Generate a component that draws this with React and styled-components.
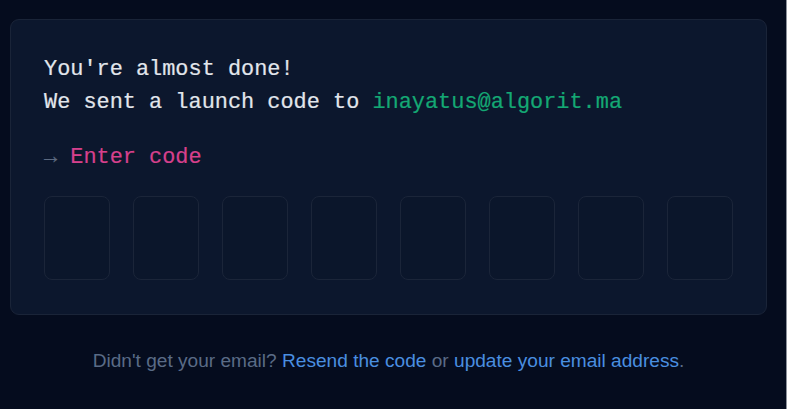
import React from "react";
import styled, { createGlobalStyle } from "styled-components";

const Global = createGlobalStyle`
  html, body { margin: 0; padding: 0; background: #050c1e; }
  body { font-family: "Liberation Sans", Arial, sans-serif; }
`;

const Page = styled.div`
  min-height: 409px;
  box-sizing: border-box;
  background: #050c1e;
  border-right: 1px solid #8d929b;
  padding: 19px 19px 0 10px;
`;

const Card = styled.div`
  background: #0c172d;
  border: 1px solid #1a2438;
  border-radius: 9px;
  padding: 34px 33px 34px 33px;
  font-family: "Liberation Mono", "Courier New", monospace;
  font-size: 21.9px;
  line-height: 32.5px;
  color: #e2e6ec;
  -webkit-text-stroke: 0.2px currentColor;
`;

const Line = styled.div`
  white-space: pre;
`;

const Email = styled.span`
  color: #14a874;
`;

const Prompt = styled.div`
  margin-top: 23px;
  white-space: pre;
`;

const Arrow = styled.span`
  color: #5d6a80;
`;

const Pink = styled.span`
  color: #d6408c;
`;

const Boxes = styled.div`
  margin-top: 21px;
  display: grid;
  grid-template-columns: repeat(8, 66px);
  justify-content: space-between;
`;

const CodeBox = styled.div`
  height: 84px;
  box-sizing: border-box;
  border: 1px solid #1b2539;
  border-radius: 8px;
  background: #0b162b;
`;

const Footer = styled.p`
  margin: 34px 0 0;
  text-align: center;
  font-size: 19.1px;
  line-height: 24px;
  color: #5a6b86;
`;

const Link = styled.a`
  color: #4a8fe0;
  text-decoration: none;
`;

export default function App() {
  return (
    <Page>
      <Global />
      <Card>
        <Line>You're almost done!</Line>
        <Line>
          We sent a launch code to <Email>inayatus@algorit.ma</Email>
        </Line>
        <Prompt>
          <Arrow>→</Arrow> <Pink>Enter code</Pink>
        </Prompt>
        <Boxes>
          {Array.from({ length: 8 }).map((_, i) => (
            <CodeBox key={i} />
          ))}
        </Boxes>
      </Card>
      <Footer>
        Didn't get your email? <Link href="#">Resend the code</Link> or{" "}
        <Link href="#">update your email address</Link>.
      </Footer>
    </Page>
  );
}
